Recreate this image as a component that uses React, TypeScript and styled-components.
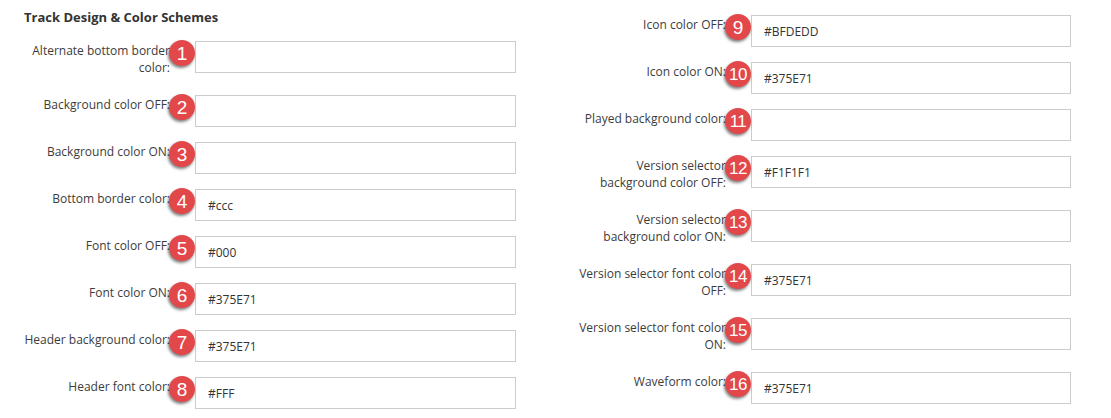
import React from "react";
import styled, { createGlobalStyle } from "styled-components";

interface ColorField {
  num: number;
  label: string;
  value: string;
}

const leftFields: ColorField[] = [
  { num: 1, label: "Alternate bottom border color:", value: "" },
  { num: 2, label: "Background color OFF:", value: "" },
  { num: 3, label: "Background color ON:", value: "" },
  { num: 4, label: "Bottom border color:", value: "#ccc" },
  { num: 5, label: "Font color OFF:", value: "#000" },
  { num: 6, label: "Font color ON:", value: "#375E71" },
  { num: 7, label: "Header background color:", value: "#375E71" },
  { num: 8, label: "Header font color:", value: "#FFF" },
];

const rightFields: ColorField[] = [
  { num: 9, label: "Icon color OFF:", value: "#BFDEDD" },
  { num: 10, label: "Icon color ON:", value: "#375E71" },
  { num: 11, label: "Played background color:", value: "" },
  { num: 12, label: "Version selector background color OFF:", value: "#F1F1F1" },
  { num: 13, label: "Version selector background color ON:", value: "" },
  { num: 14, label: "Version selector font color OFF:", value: "#375E71" },
  { num: 15, label: "Version selector font color ON:", value: "" },
  { num: 16, label: "Waveform color:", value: "#375E71" },
];

const FieldRow = ({ field, wide }: { field: ColorField; wide: number }) => (
  <Row $inputWidth={wide}>
    <Label>{field.label}</Label>
    <Input type="text" defaultValue={field.value} />
    <Badge $twoDigits={field.num > 9}>{field.num}</Badge>
  </Row>
);

const App = () => {
  return (
    <>
      <GlobalStyle />
      <Page>
        <LeftColumn>
          <Heading>Track Design &amp; Color Schemes</Heading>
          {leftFields.map((f) => (
            <FieldRow key={f.num} field={f} wide={321} />
          ))}
        </LeftColumn>
        <RightColumn>
          {rightFields.map((f) => (
            <FieldRow key={f.num} field={f} wide={320} />
          ))}
        </RightColumn>
      </Page>
    </>
  );
};

export default App;

const GlobalStyle = createGlobalStyle`
  body {
    margin: 0;
    background: #fff;
    font-family: "Open Sans", "Liberation Sans", sans-serif;
  }
`;

const Page = styled.div`
  display: flex;
  gap: 60px;
  padding-left: 20px;
`;

const LeftColumn = styled.div`
  display: flex;
  flex-direction: column;
  padding-top: 8px;
`;

const RightColumn = styled.div`
  display: flex;
  flex-direction: column;
  padding-top: 15px;
`;

const Heading = styled.h3`
  margin: 0 0 15px 4px;
  font-size: 13px;
  font-weight: 700;
  line-height: 18px;
  color: #333;
`;

const Row = styled.div<{ $inputWidth: number }>`
  position: relative;
  display: grid;
  grid-template-columns: 150px ${({ $inputWidth }) => $inputWidth}px;
  column-gap: 25px;
  align-items: start;
  margin-bottom: 15px;
`;

const Label = styled.label`
  padding: 1px 0 4px;
  text-align: right;
  font-size: 12px;
  line-height: 17px;
  color: #3c3c3c;
`;

const Input = styled.input`
  box-sizing: border-box;
  height: 32px;
  margin: 0;
  padding: 0 12px;
  border: 1px solid #ccc;
  border-radius: 0;
  outline: none;
  font-family: "Open Sans", "Liberation Sans", sans-serif;
  font-size: 12px;
  color: #333;
`;

// numbered marker that sits between a label and its input
const Badge = styled.span<{ $twoDigits: boolean }>`
  position: absolute;
  left: 149px;
  top: -1px;
  width: 26px;
  height: 26px;
  border-radius: 50%;
  background: #e2474a;
  box-shadow: -1px 2px 3px rgba(0, 0, 0, 0.5);
  display: flex;
  align-items: center;
  justify-content: center;
  color: #fff;
  font-family: "Liberation Sans", Arial, sans-serif;
  font-size: ${({ $twoDigits }) => ($twoDigits ? "17px" : "19px")};
  letter-spacing: ${({ $twoDigits }) => ($twoDigits ? "-0.5px" : "0")};
  line-height: 1;
`;
